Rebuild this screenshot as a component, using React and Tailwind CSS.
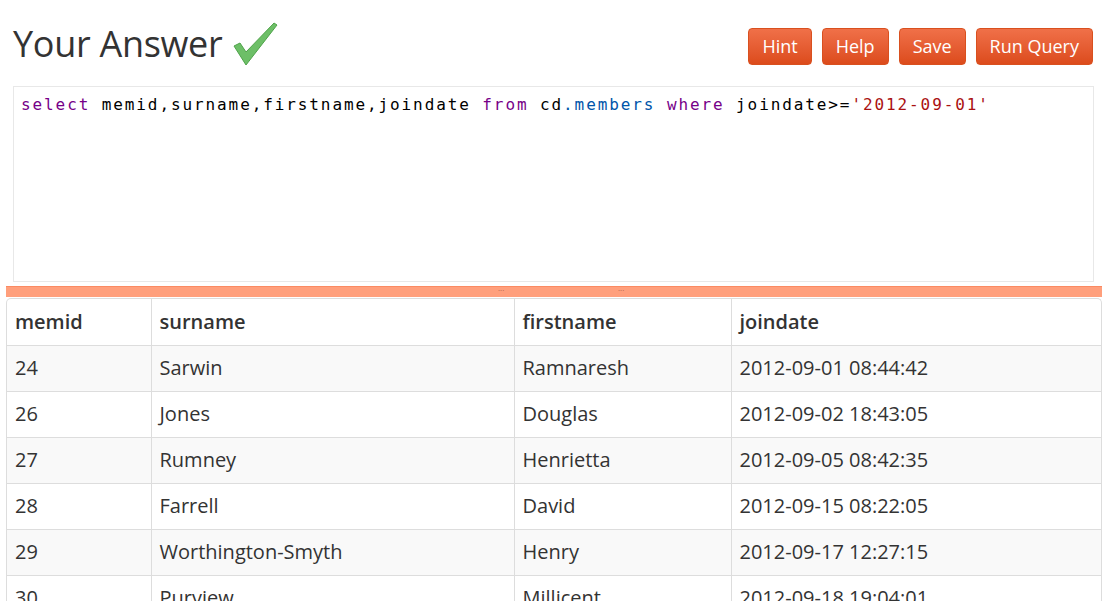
import React from "react";

const rows = [
  ["24", "Sarwin", "Ramnaresh", "2012-09-01 08:44:42"],
  ["26", "Jones", "Douglas", "2012-09-02 18:43:05"],
  ["27", "Rumney", "Henrietta", "2012-09-05 08:42:35"],
  ["28", "Farrell", "David", "2012-09-15 08:22:05"],
  ["29", "Worthington-Smyth", "Henry", "2012-09-17 12:27:15"],
  ["30", "Purview", "Millicent", "2012-09-18 19:04:01"],
];

function Btn({ children }) {
  return (
    <button className="h-[37px] px-[13px] rounded-[4px] border border-[#d9501f] bg-gradient-to-b from-[#f07048] to-[#dc4b1b] text-white text-[18px] leading-none">
      {children}
    </button>
  );
}

export default function App() {
  return (
    <div className="w-[1107px] h-[601px] overflow-hidden bg-white text-[#333]" style={{ fontFamily: '"Open Sans", "Noto Sans", sans-serif' }}>
      <div className="flex items-center justify-between pl-[13px] pr-[14px] pt-[20px] h-[86px] pb-[18px]">
        <div className="flex items-center gap-[11px]">
          <h1 className="text-[36px] leading-none font-normal tracking-[-0.3px] text-[#333]">Your Answer</h1>
          <svg width="46" height="46" viewBox="0 0 46 46" className="mt-[1px]">
            <path d="M1 24 L7 21 L13 30 L41 1 L44 3 L13 43 Z" fill="#6dbf67" stroke="#4fa34a" strokeWidth="1" strokeLinejoin="round" />
          </svg>
        </div>
        <div className="flex gap-[10px] mt-[4px]">
          <Btn>Hint</Btn>
          <Btn>Help</Btn>
          <Btn>Save</Btn>
          <Btn>Run Query</Btn>
        </div>
      </div>
      <div className="mx-[13px] h-[196px] border border-[#e8e8e8] pl-[7px] pt-[6px] text-[16px] leading-[24px] tracking-[1.9px] whitespace-pre" style={{ fontFamily: '"DejaVu Sans Mono", "Liberation Mono", monospace' }}>
        <span className="text-[#770088]">select</span>
        <span className="text-black"> memid,surname,firstname,joindate </span>
        <span className="text-[#770088]">from</span>
        <span className="text-black"> cd</span>
        <span className="text-[#0055aa]">.members</span>
        <span className="text-[#770088]"> where</span>
        <span className="text-black"> joindate&gt;=</span>
        <span className="text-[#aa1111]">'2012-09-01'</span>
      </div>
      <div className="mt-[4px] ml-[6px] mr-[5px] h-[11px] bg-[#ff9f7c] border-t border-[#fb8a62] relative">
        <span className="absolute left-[492px] top-[-3px] text-[8px] text-[#b5664a] leading-none">...</span>
        <span className="absolute left-[612px] top-[-3px] text-[8px] text-[#b5664a] leading-none">...</span>
      </div>
      <div className="mt-[1px] mx-[6px] mr-[5px] border border-[#ddd] rounded-t-[5px] border-b-0">
        <table className="w-full border-collapse text-[20px]">
          <colgroup>
            <col style={{ width: 144 }} />
            <col style={{ width: 363 }} />
            <col style={{ width: 217 }} />
            <col />
          </colgroup>
          <thead>
            <tr className="h-[46px]">
              {["memid", "surname", "firstname", "joindate"].map((h, i) => (
                <th key={h} className={`text-left font-semibold px-[8px] text-[#333] ${i > 0 ? "border-l border-[#ddd]" : ""}`}>{h}</th>
              ))}
            </tr>
          </thead>
          <tbody>
            {rows.map((r, ri) => (
              <tr key={ri} className={`h-[46px] border-t border-[#ddd] ${ri % 2 === 0 ? "bg-[#f9f9f9]" : "bg-white"}`}>
                {r.map((c, i) => (
                  <td key={i} className={`px-[8px] text-[#333] ${i > 0 ? "border-l border-[#ddd]" : ""}`}>{c}</td>
                ))}
              </tr>
            ))}
          </tbody>
        </table>
      </div>
    </div>
  );
}
